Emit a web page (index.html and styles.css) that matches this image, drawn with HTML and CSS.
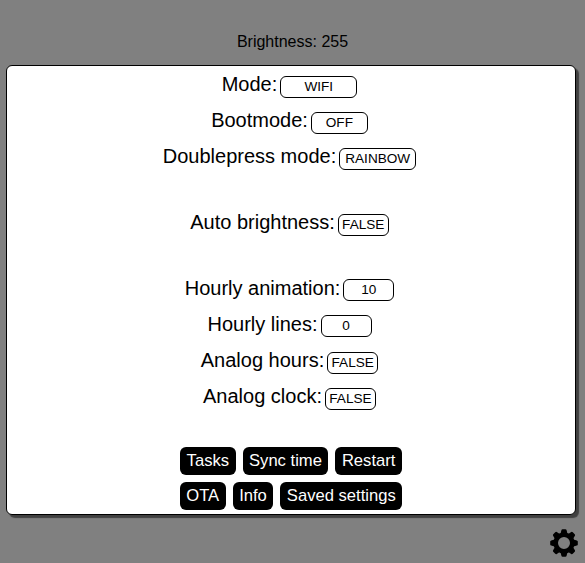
FILE: index.html
```html
<!DOCTYPE html>
<html lang="en">
<head>
<meta charset="utf-8">
<title>Clock settings</title>
<link rel="stylesheet" href="styles.css">
</head>
<body>
<div class="brightness">Brightness: 255</div>
<main class="panel">
  <div class="row"><label class="name">Mode:</label><span class="field wide">WIFI</span></div>
  <div class="row"><label class="name">Bootmode:</label><span class="field mid">OFF</span></div>
  <div class="row"><label class="name">Doublepress mode:</label><span class="field wide">RAINBOW</span></div>
  <div class="row group"><label class="name">Auto brightness:</label><span class="field">FALSE</span></div>
  <div class="row group"><label class="name">Hourly animation:</label><span class="field">10</span></div>
  <div class="row"><label class="name">Hourly lines:</label><span class="field">0</span></div>
  <div class="row"><label class="name">Analog hours:</label><span class="field">FALSE</span></div>
  <div class="row"><label class="name">Analog clock:</label><span class="field">FALSE</span></div>
  <div class="buttons first"><button>Tasks</button><button>Sync time</button><button>Restart</button></div>
  <div class="buttons"><button>OTA</button><button>Info</button><button>Saved settings</button></div>
</main>
<footer class="foot">
  <svg class="gear" viewBox="-14 -14 28 28">
    <circle r="8.300" fill="none" stroke="#000" stroke-width="4.600"/>
    <path id="tooth" d="M-3.400-9.500L-2.600-12.800Q-2.400-13.800-1.400-13.800H1.400Q2.400-13.800 2.600-12.800L3.400-9.500z"/>
    <use href="#tooth" transform="rotate(45)"/>
    <use href="#tooth" transform="rotate(90)"/>
    <use href="#tooth" transform="rotate(135)"/>
    <use href="#tooth" transform="rotate(180)"/>
    <use href="#tooth" transform="rotate(225)"/>
    <use href="#tooth" transform="rotate(270)"/>
    <use href="#tooth" transform="rotate(315)"/>
  </svg>
</footer>
</body>
</html>
```

FILE: styles.css
```css
* { box-sizing: border-box; }
html, body { height: 100%; }
body {
  margin: 0;
  background: #808080;
  color: #000;
  font-family: "Liberation Sans", Arial, sans-serif;
  display: flex;
  flex-direction: column;
  overflow: hidden;
}
.brightness {
  flex: none;
  height: 65px;
  padding-top: 33px;
  font-size: 16px;
  line-height: 18px;
  text-align: center;
}
.panel {
  flex: none;
  height: 450px;
  margin: 0 9px 0 6px;
  padding-top: 2.500px;
  background: #fff;
  border: 1px solid #000;
  border-radius: 6px;
  box-shadow: 3px 3px 1px #404040;
}
.row {
  height: 36.200px;
  display: flex;
  justify-content: center;
  align-items: center;
  gap: 3px;
  padding-right: 3px;
}
.group { margin-top: 29.400px; }
.name {
  font-size: 20px;
  line-height: 23px;
  padding-bottom: 4px;
  white-space: nowrap;
}
.field {
  width: 51px;
  height: 22px;
  border: 1px solid #000;
  border-radius: 6px;
  font-size: 13.600px;
  line-height: 19px;
  display: flex;
  justify-content: center;
  white-space: nowrap;
}
.wide { width: 77px; }
.mid { width: 57px; }
.buttons {
  display: flex;
  justify-content: center;
  gap: 7px;
  margin-bottom: 7px;
}
.first { margin-top: 30px; }
button {
  height: 28px;
  padding: 0 6.500px 1px;
  border: 0;
  border-radius: 6px;
  background: #000;
  color: #fff;
  font: 16.600px/27px "Liberation Sans", Arial, sans-serif;
}
.foot {
  flex: 1;
  display: flex;
  justify-content: flex-end;
  padding: 14px 7px 0 0;
}
.gear { width: 28px; height: 28px; }
```
